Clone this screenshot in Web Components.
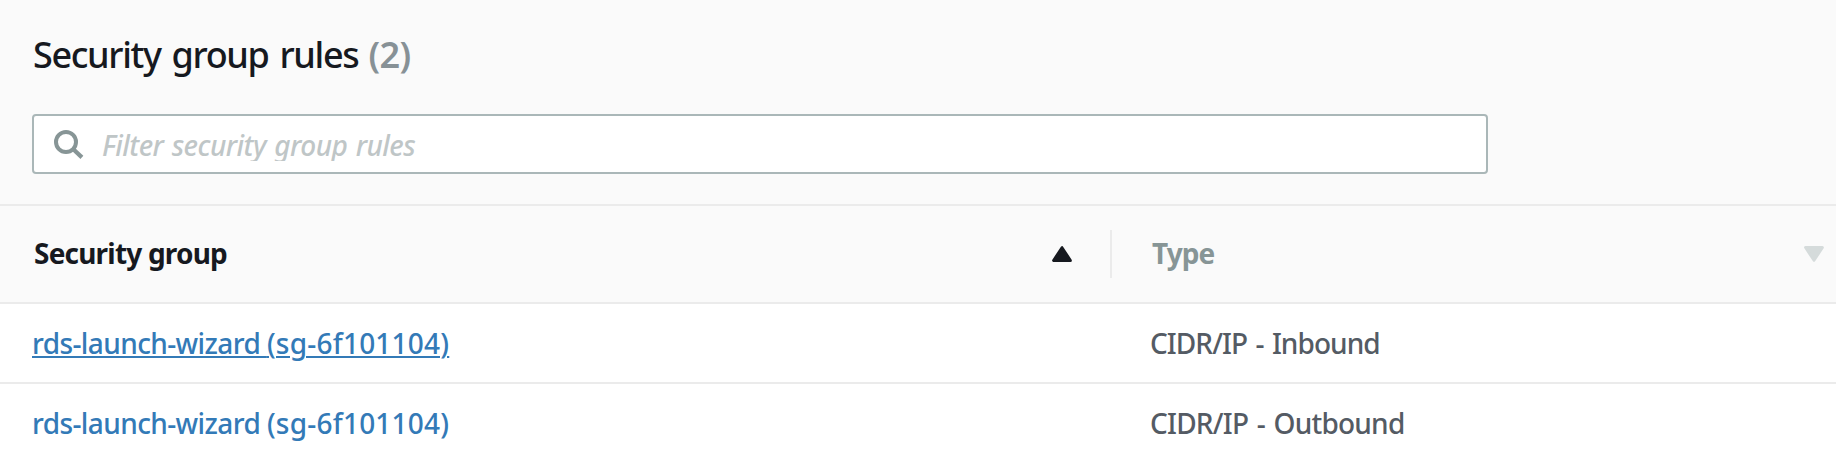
<!DOCTYPE html>
<html lang="en">
<head>
<meta charset="utf-8">
<title>Security group rules</title>
<style>
  body { margin: 0; background: #fff; font-family: "Noto Sans", "Open Sans", sans-serif; font-size: 28px; font-weight: 500; color: #545b64; }
  .name { letter-spacing: -.6px; }
  .id { letter-spacing: .22px; }
</style>
</head>
<body>
<rules-panel>
  <panel-heading slot="heading" count="(2)">Security group rules</panel-heading>
  <filter-box slot="filter">Filter security group rules</filter-box>
  <rules-header></rules-header>
  <rule-row linked><span class="name">rds-launch-wizard <span class="id">(sg-6f101104)</span></span><span slot="type" style="letter-spacing:-.93px;word-spacing:2px">CIDR/IP - Inbound</span></rule-row>
  <rule-row><span class="name">rds-launch-wizard <span class="id">(sg-6f101104)</span></span><span slot="type" style="letter-spacing:-.77px;word-spacing:2px">CIDR/IP - Outbound</span></rule-row>
</rules-panel>
<script>
class Base extends HTMLElement {
  constructor() {
    super();
    this.attachShadow({ mode: 'open' }).innerHTML = this.constructor.markup;
  }
}

customElements.define('rules-panel', class extends Base {
  static markup = `<style>
    :host { display: block; height: 462px; overflow: hidden; }
    header { box-sizing: border-box; height: 204px; padding: 33px 32px 0; background: #fafafa; display: flex; flex-direction: column; gap: 37px; }
  </style>
  <header><slot name="heading"></slot><slot name="filter"></slot></header>
  <slot></slot>`;
});

customElements.define('panel-heading', class extends Base {
  static markup = `<style>
    :host { display: flex; height: 44px; line-height: 44px; font-size: 36px; color: #16191f; white-space: nowrap; }
    .title { width: 335.5px; padding-left: 1px; letter-spacing: -1.36px; word-spacing: 3px; }
    .count { color: #879196; font-weight: 600; letter-spacing: -.6px; }
  </style>
  <span class="title"><slot></slot></span><span class="count"></span>`;
  connectedCallback() {
    this.shadowRoot.querySelector('.count').textContent = this.getAttribute('count');
  }
});

customElements.define('filter-box', class extends Base {
  static markup = `<style>
    :host { box-sizing: border-box; display: flex; align-items: center; width: 1456px; height: 60px; padding-left: 20px; border: 2px solid #aab7b8; border-radius: 4px; background: #fff; }
    svg { width: 32px; height: 32px; flex: none; }
    .hint { margin: 2px 0 0 16px; height: 32px; line-height: 32px; overflow: hidden; white-space: nowrap; padding-right: 8px; font-style: italic; color: #bfc6c7; letter-spacing: -.55px; word-spacing: 1.6px; }
  </style>
  <svg viewBox="0 0 32 32" fill="none" stroke="#879596" stroke-width="4"><circle cx="12" cy="14" r="10"/><path d="M18.8 20.8 27.9 29.4" stroke-width="4.2"/></svg>
  <span class="hint"><slot></slot></span>`;
});

customElements.define('sort-arrow', class extends Base {
  static markup = `<style>
    :host { display: block; width: 20px; height: 16px; color: #d5dbdb; }
    :host([direction="up"]) { color: #16191f; transform: scaleY(-1); }
    svg { display: block; }
  </style>
  <svg width="20" height="16" viewBox="0 0 20 16"><path fill="currentColor" stroke="currentColor" stroke-width="3" stroke-linejoin="round" d="M1.6 1.5H18.4L10 14.3Z"/></svg>`;
});

customElements.define('rules-header', class extends Base {
  static markup = `<style>
    :host { box-sizing: border-box; height: 100px; display: grid; grid-template-columns: 1112px 1fr; align-items: center; background: #fafafa; border: solid #ebebeb; border-width: 2px 0; font-weight: 700; line-height: 38px; }
    div { display: flex; align-items: center; justify-content: space-between; box-sizing: border-box; height: 48px; }
    span { margin-bottom: 2px; }
    .group { padding: 0 38px 0 34px; border-right: 2px solid #ebebeb; color: #16191f; letter-spacing: -.8px; }
    .type { padding: 0 12px 0 40px; color: #879596; letter-spacing: -.93px; }
  </style>
  <div class="group"><span>Security group</span><sort-arrow direction="up"></sort-arrow></div>
  <div class="type"><span>Type</span><sort-arrow></sort-arrow></div>`;
});

customElements.define('rule-row', class extends Base {
  static markup = `<style>
    :host { box-sizing: border-box; height: 80px; display: grid; grid-template-columns: 1118px 1fr; padding-left: 32px; line-height: 78px; white-space: nowrap; background: #fff; border-bottom: 2px solid #ebebeb; }
    a { color: #337ab7; }
    :host([linked]) a { text-decoration: underline; text-decoration-thickness: 2px; text-underline-offset: 2px; }
    :host(:last-of-type) { border-bottom-color: transparent; }
  </style>
  <div><a><slot></slot></a></div><div><slot name="type"></slot></div>`;
});
</script>
</body>
</html>
